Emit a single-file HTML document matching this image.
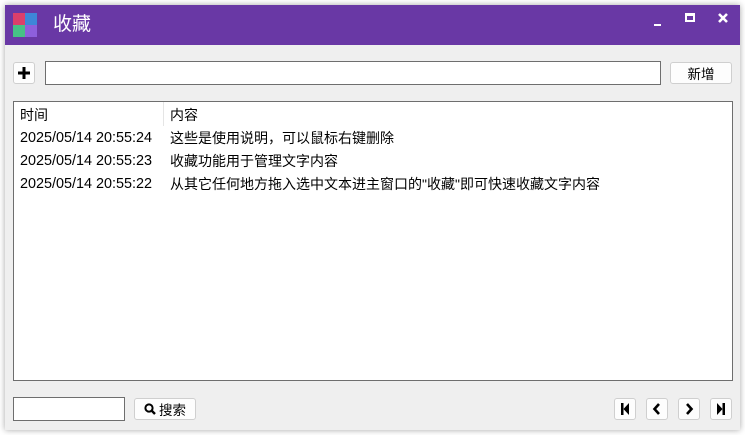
<!DOCTYPE html>
<html><head><meta charset="utf-8"><style>
*{box-sizing:border-box;margin:0;padding:0}
body{width:745px;height:435px;background:#fff;position:relative;overflow:hidden;font-family:"Liberation Sans","Microsoft YaHei","Noto Sans CJK SC",sans-serif;font-size:13.5px;color:#000}
.win{position:absolute;left:5px;top:5px;width:735px;height:425px;background:#efefef;box-shadow:0 0 6px rgba(0,0,0,.35)}
.tb{position:absolute;left:0;top:0;width:735px;height:40px;background:#6938a5}
.ab{position:absolute}
.btn{position:absolute;background:#fdfdfd;border:1px solid #cfcfcf;border-radius:3px;display:flex;align-items:center;justify-content:center}
.inp{position:absolute;background:#fff;border:1px solid #6e6e6e}
.cell{position:absolute;white-space:nowrap;line-height:16px}
.ts{font-size:14.4px}
.zh{font-size:14px}
</style></head><body>
<div class="win">
 <div class="tb">
  <div class="ab" style="left:8px;top:8px;width:12px;height:12px;background:#dc3f6b"></div>
  <div class="ab" style="left:20px;top:8px;width:12px;height:12px;background:#3e86d8"></div>
  <div class="ab" style="left:8px;top:20px;width:12px;height:12px;background:#46c086"></div>
  <div class="ab" style="left:20px;top:20px;width:12px;height:12px;background:#8d5fdc"></div>
  <div class="ab" style="left:48px;top:8px;color:#fff;font-size:19px;line-height:24px">收藏</div>
  <div class="ab" style="left:649px;top:19px;width:7px;height:2px;background:#fff"></div>
  <div class="ab" style="left:680px;top:8px;width:10px;height:9px;border:2px solid #fff;border-top-width:3px"></div>
  <svg class="ab" style="left:713px;top:8px" width="10" height="10"><path d="M1 1L9 9M9 1L1 9" stroke="#fff" stroke-width="2.6"/></svg>
 </div>
</div>
<div class="btn" style="left:13px;top:62px;width:22px;height:22px"><svg width="12" height="12"><path d="M6 0V12M0 6H12" stroke="#000" stroke-width="3"/></svg></div>
<div class="inp" style="left:45px;top:61px;width:616px;height:24px"></div>
<div class="btn" style="left:670px;top:62px;width:62px;height:22px">新增</div>
<div class="inp" style="left:13px;top:101px;width:720px;height:280px">
 <div class="ab" style="left:149px;top:0;width:1px;height:24px;background:#e5e5e5"></div>
 <div class="cell zh" style="left:6px;top:5px">时间</div>
 <div class="cell zh" style="left:156px;top:5px">内容</div>
 <div class="cell ts" style="left:6px;top:28px">2025/05/14 20:55:24</div>
 <div class="cell zh" style="left:156px;top:28px">这些是使用说明，可以鼠标右键删除</div>
 <div class="cell ts" style="left:6px;top:51px">2025/05/14 20:55:23</div>
 <div class="cell zh" style="left:156px;top:51px">收藏功能用于管理文字内容</div>
 <div class="cell ts" style="left:6px;top:74px">2025/05/14 20:55:22</div>
 <div class="cell zh" style="left:156px;top:74px">从其它任何地方拖入选中文本进主窗口的"收藏"即可快速收藏文字内容</div>
</div>
<div class="inp" style="left:13px;top:397px;width:112px;height:24px"></div>
<div class="btn" style="left:134px;top:398px;width:62px;height:22px"><svg width="12" height="12" style="margin-right:3px"><circle cx="5" cy="5" r="3.6" fill="none" stroke="#000" stroke-width="2"/><path d="M7.5 7.5L11 11" stroke="#000" stroke-width="2.4"/></svg>搜索</div>
<div class="btn" style="left:614px;top:398px;width:22px;height:22px"><svg width="10" height="12"><path d="M1 0h2.5v12H1zM9 0v12L3.5 6z" fill="#000"/></svg></div>
<div class="btn" style="left:646px;top:398px;width:22px;height:22px"><svg width="10" height="12"><path d="M7 1L2.5 6L7 11" fill="none" stroke="#000" stroke-width="2.6"/></svg></div>
<div class="btn" style="left:678px;top:398px;width:22px;height:22px"><svg width="10" height="12"><path d="M3 1L7.5 6L3 11" fill="none" stroke="#000" stroke-width="2.6"/></svg></div>
<div class="btn" style="left:710px;top:398px;width:22px;height:22px"><svg width="10" height="12"><path d="M1 0v12L6.5 6zM6.5 0H9v12H6.5z" fill="#000"/></svg></div>
</body></html>
